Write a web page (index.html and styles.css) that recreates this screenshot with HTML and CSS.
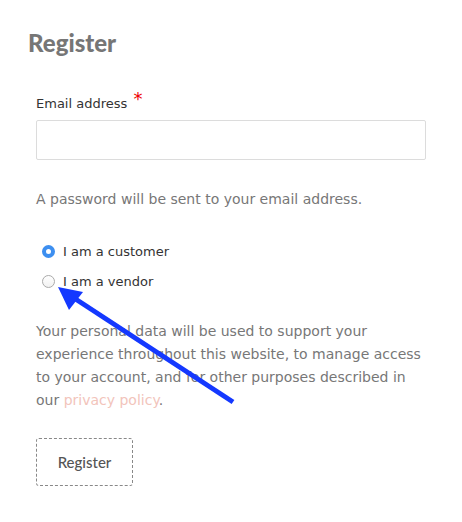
FILE: index.html
```html
<!DOCTYPE html>
<html lang="en">
<head>
    <meta charset="UTF-8">
    <meta name="viewport" content="width=device-width, initial-scale=1.0">
    <title>Register</title>
    <link rel="stylesheet" href="styles.css">
</head>
<body>
    <div class="page">
        <h2 class="title">Register</h2>
        <form class="register">
            <label class="field-label" for="email">Email address <span class="required">*</span></label>
            <input type="email" id="email" class="field-input">

            <p class="hint">A password will be sent to your email address.</p>

            <div class="roles">
                <label class="role"><input type="radio" name="role" checked> I am a customer</label>
                <label class="role"><input type="radio" name="role"> I am a vendor</label>
            </div>

            <p class="privacy">Your personal data will be used to support your experience throughout this website, to manage access to your account, and for other purposes described in our <a href="#" class="privacy-link">privacy policy</a>.</p>

            <button type="button" class="submit">Register</button>
        </form>

        <svg class="arrow" width="462" height="522" viewBox="0 0 462 522">
            <line x1="233" y1="402" x2="74" y2="298" stroke="#1438ff" stroke-width="5"/>
            <polygon points="58,287 69,310 83,292" fill="#1438ff"/>
        </svg>
    </div>
</body>
</html>
```

FILE: styles.css
```css
body {
    margin: 0;
    background-color: #fff;
    font-family: "DejaVu Sans", Verdana, sans-serif;
}

.page {
    position: relative;
    padding: 27px 36px 0 28px;
}

.title {
    margin: 0;
    font-family: Lato, "Open Sans", sans-serif;
    font-size: 24px;
    font-weight: 900;
    line-height: 32px;
    color: #767676;
}

.register {
    margin: 35px 0 0 8px;
    width: 390px;
}

.field-label {
    display: block;
    font-size: 13px;
    line-height: 20px;
    color: #333;
}

.required {
    margin-left: 2px;
    color: #e00;
    font-size: 18px;
    line-height: 10px;
    position: relative;
    top: -3px;
}

.field-input {
    display: block;
    box-sizing: border-box;
    width: 100%;
    height: 40px;
    margin-top: 6px;
    border: 1px solid #dcdcdc;
    border-radius: 2px;
}

.hint {
    margin: 28px 0 0;
    font-size: 14px;
    line-height: 22px;
    color: #777;
}

.roles {
    margin-top: 26px;
}

.role {
    display: flex;
    align-items: center;
    height: 30px;
    font-size: 13px;
    color: #333;
    gap: 8px;
}

.role input {
    appearance: none;
    -webkit-appearance: none;
    box-sizing: border-box;
    width: 13px;
    height: 13px;
    margin: 0 0 0 6px;
    border-radius: 50%;
    border: 1px solid #aaa;
    background: linear-gradient(#fff, #f1f1f1);
}

.role input:checked {
    border: 4.5px solid #3d8ff0;
    background: #fff;
}

.privacy {
    margin: 24px 0 0;
    font-size: 14px;
    line-height: 23px;
    color: #777;
}

.privacy-link {
    color: #f2c4bb;
    text-decoration: none;
}

.submit {
    margin-top: 26px;
    width: 97px;
    height: 48px;
    background: #fff;
    border: 1px dashed #888;
    border-radius: 3px;
    font-family: Lato, "Open Sans", sans-serif;
    font-size: 15px;
    font-weight: 500;
    color: #555;
}

.arrow {
    position: absolute;
    top: 0;
    left: 0;
    pointer-events: none;
}
```
